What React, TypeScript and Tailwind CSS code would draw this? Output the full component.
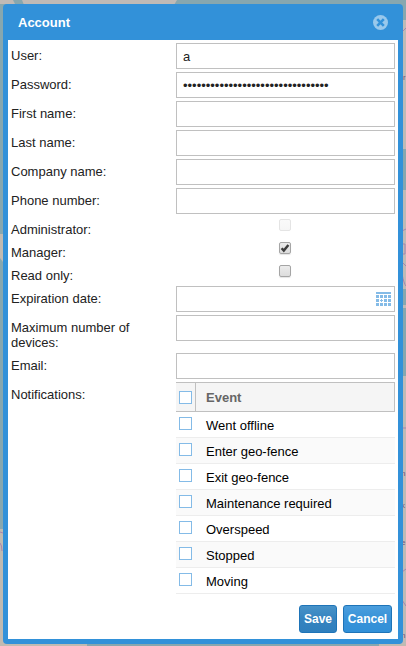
import { ReactNode } from "react";

function MapBackdrop() {
  return (
    <svg className="absolute inset-0" width="406" height="646" viewBox="0 0 406 646" fill="none">
      <rect width="406" height="646" fill="#87a7af" />
      <path d="M0 0H13L15 4H0zM22 0H177L174 5H24z" fill="#c0bab6" />
      <path d="M0 234H3V262L0 258zM0 529H10V646H0z" fill="#c0bab1" />
      <path d="M400 20H406V149H400zM400 190H406V289H400zM400 305H406V308H400zM400 376H406V646H400z" fill="#c0bab6" />
      <path d="M379 644H406V646H379zM0 644H87V646H0z" fill="#c0bab1" />
      <path d="M0 532L3 533M0 543Q2 545 2 551M402 32L406 28M402 231L406 229M402 244H405V254H402M402 262L406 266M402 274Q404 284 406 286M402 428H406M402 572L406 569M402 600L406 606" stroke="#a982ad" />
      <g fill="#755077" className="text-[8px]" fontFamily="Liberation Sans">
        <text x="403" y="80">r</text>
        <text x="401" y="476">n</text>
        <text x="401" y="508">k</text>
        <text x="401" y="545">e</text>
        <text x="401" y="638">n</text>
      </g>
    </svg>
  );
}

function TextBox({ value = "", type = "text", children }: { value?: string; type?: string; children?: ReactNode }) {
  return (
    <div className="flex h-[26px] w-[219px] shrink-0 items-center border border-[#c0c0c0] bg-white pl-1.5">
      <input
        type={type}
        defaultValue={value}
        className="h-6 min-w-0 flex-1 bg-transparent text-[13px] outline-none"
      />
      {children}
    </div>
  );
}

function Row({ label, height = "h-[29px]", children }: { label: string; height?: string; children: ReactNode }) {
  return (
    <div className={"flex shrink-0 " + height}>
      <div className="w-[140px] shrink-0 pt-[5px] pr-1">{label}</div>
      <div className="ml-[25px] w-[219px] shrink-0">{children}</div>
    </div>
  );
}

function NativeCheck({ checked = false, disabled = false }: { checked?: boolean; disabled?: boolean }) {
  return (
    <div
      className={
        "mt-0.5 ml-[103px] size-3 rounded-[2px] border bg-linear-to-b " +
        (disabled
          ? "border-[#e4e4e4] from-[#fafafa] to-[#f6f6f6]"
          : "border-[#a5a5a5] from-[#ececec] to-[#dcdcdc] shadow-[0_1px_1px_#e5e5e5]")
      }
    >
      {checked && (
        <svg className="block" width="10" height="10" viewBox="0 0 10 10" fill="none">
          <path d="M1.6 5.2L3.8 7.6L8.4 2" stroke="#3d3d3d" strokeWidth="2.4" />
        </svg>
      )}
    </div>
  );
}

function CalendarIcon() {
  const cells = [0, 1, 2].flatMap((r) => [0, 1, 2, 3].map((c) => [c, r]));
  return (
    <svg className="mr-[3px] shrink-0" width="15" height="14" viewBox="0 0 15 14" fill="#84bbe7" shapeRendering="crispEdges">
      <path d="M0 0h15v2H0z" />
      {cells.map(([c, r]) =>
        c === 1 && r === 1 ? (
          <path key="today" d="M5 7h1v1h1v1H6v1H5V9H4V8h1z" />
        ) : (
          <rect key={c + "-" + r} x={c * 4} y={3 + r * 4} width="3" height="3" />
        ),
      )}
    </svg>
  );
}

const gridCheck = "size-[13px] shrink-0 border border-[#84bbe7] bg-white";

const events = ["Went offline", "Enter geo-fence", "Exit geo-fence", "Maintenance required", "Overspeed", "Stopped", "Moving"];

function EventGrid() {
  return (
    <div className="w-[219px]">
      <div className="flex h-[30px] border-y border-r border-[#c0c0c0] bg-[#f5f5f5]">
        <div className="w-5 shrink-0 border-r border-[#c0c0c0] pt-2 pl-[3px]">
          <div className={gridCheck} />
        </div>
        <div className="pt-[7px] pl-2.5 font-bold text-[#666]">Event</div>
      </div>
      {events.map((name) => (
        <div key={name} className="flex h-[26px] border-b border-[#ededed] pt-[5px] pl-[3px] even:bg-white odd:bg-[#fafafa]">
          <div className={gridCheck} />
          <div className="pt-px pl-3.5 whitespace-nowrap text-black">{name}</div>
        </div>
      ))}
    </div>
  );
}

export default function App() {
  return (
    <div className="relative h-[646px] w-[406px] overflow-hidden pt-1 pl-[3px] font-['Liberation_Sans',Arial,sans-serif] text-[13px] leading-[15px] text-[#222]">
      <MapBackdrop />
      <div className="relative flex h-[640px] w-[400px] flex-col rounded bg-[#3291d9] px-[5px] pb-[5px]">
        <div className="flex h-9 shrink-0 items-center justify-between pr-2.5 pl-2.5">
          <div className="font-bold text-white">Account</div>
          <svg width="15" height="15" viewBox="0 0 15 15">
            <circle cx="7.5" cy="7.5" r="7.5" fill="#98c8ec" />
            <path d="M4.2 4.2l6.6 6.6M10.8 4.2l-6.6 6.6" stroke="#3291d9" strokeWidth="2.6" />
          </svg>
        </div>
        <div className="flex min-h-0 flex-1 flex-col bg-white pt-[3px] pl-[3px]">
          <Row label="User:"><TextBox value="a" /></Row>
          <Row label="Password:"><TextBox type="password" value="abcdefghijklmnopqrstuvwxyz012345" /></Row>
          <Row label="First name:"><TextBox /></Row>
          <Row label="Last name:"><TextBox /></Row>
          <Row label="Company name:"><TextBox /></Row>
          <Row label="Phone number:"><TextBox /></Row>
          <Row label="Administrator:" height="h-[23px]"><NativeCheck disabled /></Row>
          <Row label="Manager:" height="h-[23px]"><NativeCheck checked /></Row>
          <Row label="Read only:" height="h-[23px]"><NativeCheck /></Row>
          <Row label="Expiration date:"><TextBox><CalendarIcon /></TextBox></Row>
          <Row label="Maximum number of devices:" height="h-[38px]"><TextBox /></Row>
          <Row label="Email:"><TextBox /></Row>
          <Row label="Notifications:" height="h-[212px]"><EventGrid /></Row>
          <div className="mt-[11px] mr-1.5 flex justify-end gap-1.5">
            <button className="h-7 w-[38px] rounded-[3px] border border-[#1e74b8] bg-linear-to-b from-[#4792c8] via-[#3583bf] to-[#2f7fbd] text-xs font-bold text-white">Save</button>
            <button className="h-7 w-[49px] rounded-[3px] border border-[#1e74b8] bg-linear-to-b from-[#4b9edd] via-[#3892d8] to-[#3190d8] text-xs font-bold text-white">Cancel</button>
          </div>
        </div>
      </div>
    </div>
  );
}
